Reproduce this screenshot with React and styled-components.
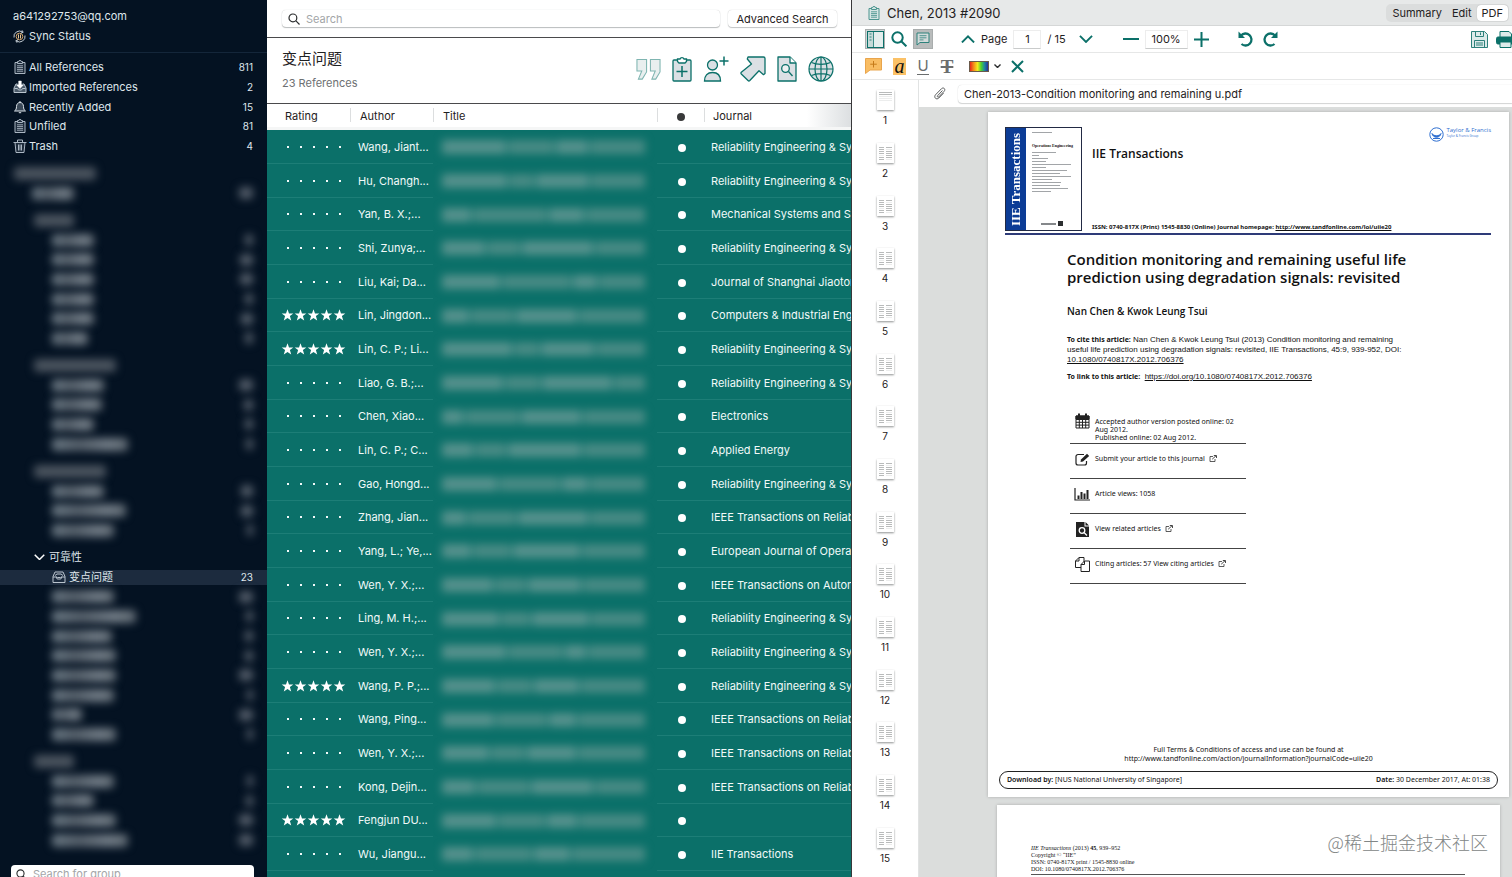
import React, { useState } from "react";
import styled, { createGlobalStyle, css } from "styled-components";

const GlobalStyle = createGlobalStyle`
  * {
    box-sizing: border-box;
  }

  body {
    margin: 0;
    overflow: hidden;
    background: #fff;
    color: #1f2122;
    font-family: Inter, "Noto Sans CJK SC", sans-serif;
    font-size: 11px;
    line-height: 14px;
  }

  button, input {
    font: inherit;
    color: inherit;
    border: 0;
    padding: 0;
    margin: 0;
    background: none;
  }

  ul, ol {
    list-style: none;
    margin: 0;
    padding: 0;
  }

  h1, h2, h3, p {
    margin: 0;
    font-weight: inherit;
    font-size: inherit;
  }

  svg {
    display: block;
    flex-shrink: 0;
  }
`;

const TEAL = "#0b7069";
const SERIF = `"Liberation Serif", serif`;

/* ---------- data ---------- */

const library = [
  { name: "All References", count: 811, icon: "clipboard" },
  { name: "Imported References", count: 2, icon: "import" },
  { name: "Recently Added", count: 15, icon: "bell" },
  { name: "Unfiled", count: 81, icon: "clipboard" },
  { name: "Trash", count: 4, icon: "trash" },
];

// hidden groups: [width of the name, width of the count]
const groupSets = [
  { head: 82, level: 0, items: [[42, 14]] },
  { head: 40, level: 1, items: [[42, 8], [42, 13], [42, 13], [42, 8], [42, 12], [36, 8]] },
  { head: 82, level: 1, items: [[52, 14], [50, 9], [42, 8], [76, 7]] },
  { head: 72, level: 1, items: [[52, 12], [74, 12], [62, 6]] },
];

const lowerItems = [[62, 14], [84, 7], [60, 8], [64, 8], [64, 14], [62, 6], [30, 14], [64, 6]];
const lastItems = [[62, 6], [42, 7], [64, 14], [76, 14]];

const RE = "Reliability Engineering & Sys";
const TR = "IEEE Transactions on Reliabi";

const references = [
  { author: "Wang, Jiant...", journal: RE, words: [60, 44, 30, 52] },
  { author: "Hu, Changh...", journal: RE, words: [62, 24, 50, 52] },
  { author: "Yan, B. X.;...", journal: "Mechanical Systems and Sig", words: [28, 70, 34, 56] },
  { author: "Shi, Zunya;...", journal: RE, words: [40, 30, 66, 46] },
  { author: "Liu, Kai; Da...", journal: "Journal of Shanghai Jiaotong", words: [56, 66, 24, 44] },
  { author: "Lin, Jingdon...", stars: true, journal: "Computers & Industrial Engi", words: [26, 42, 60, 64] },
  { author: "Lin, C. P.; Li...", stars: true, journal: RE, words: [66, 24, 50, 46] },
  { author: "Liao, G. B.;...", journal: RE, words: [58, 34, 66, 30] },
  { author: "Chen, Xiao...", journal: "Electronics", words: [20, 50, 56, 58] },
  { author: "Lin, C. P.; C...", journal: "Applied Energy", words: [30, 30, 70, 60] },
  { author: "Gao, Hongd...", journal: RE, words: [54, 60, 26, 54] },
  { author: "Zhang, Jian...", journal: TR, words: [22, 44, 64, 50] },
  { author: "Yang, L.; Ye,...", journal: "European Journal of Operati", words: [28, 36, 64, 60] },
  { author: "Wen, Y. X.;...", journal: "IEEE Transactions on Autom", words: [50, 30, 52, 60] },
  { author: "Ling, M. H.;...", journal: RE, words: [54, 28, 54, 52] },
  { author: "Wen, Y. X.;...", journal: RE, words: [60, 52, 20, 54] },
  { author: "Wang, P. P.;...", stars: true, journal: RE, words: [52, 34, 44, 62] },
  { author: "Wang, Ping...", journal: TR, words: [50, 48, 26, 64] },
  { author: "Wen, Y. X.;...", journal: TR, words: [46, 34, 48, 66] },
  { author: "Kong, Dejin...", journal: TR, words: [32, 50, 60, 48] },
  { author: "Fengjun DU...", stars: true, journal: "", words: [54, 46, 30, 66] },
  { author: "Wu, Jiangu...", journal: "IIE Transactions", words: [30, 54, 34, 70] },
];

/* ---------- icons ---------- */

const ClipboardIcon = ({ size = 14, color = "#aab6c2", fill = "#1d2b3b" }) => (
  <svg width={size} height={size} viewBox="0 0 14 14" fill="none" stroke={color}>
    <path d="M2 2.5h10v11H2z" fill={fill} />
    <path d="M4.5 3.5v-2h1.3a1.2 1.2 0 0 1 2.4 0h1.3v2z" fill={fill} />
    <path d="M4 5.8h6M4 7.6h6M4 9.4h6M4 11.2h6" strokeWidth="0.9" />
  </svg>
);

const ImportIcon = () => (
  <svg width="14" height="14" viewBox="0 0 14 14" fill="none" stroke="#b9c4ce">
    <path d="M4.5 4H3L1 8v4.5h12V8l-2-4H9.5" fill="#4b5a69" />
    <path d="M1.5 8.5h3l1 1.5h3l1-1.5h3" />
    <path d="M5.7 1h2.6v4h2L7 8.5 3.7 5h2z" fill="#fff" stroke="#fff" strokeWidth="0.5" />
  </svg>
);

const BellIcon = () => (
  <svg width="14" height="14" viewBox="0 0 14 14" fill="none" stroke="#dde4ea" strokeLinejoin="round">
    <path d="M1.5 11c1.6-1.1 1.9-2.2 2-4.5C3.6 4 5 2.5 7 2.5S10.4 4 10.5 6.500c.1 2.300.4 3.400 2 4.500z" fill="#3b4958" />
    <path d="M7 2.500V1M5.800 12.700h2.400" />
  </svg>
);

const TrashIcon = () => (
  <svg width="14" height="14" viewBox="0 0 14 14" fill="none" stroke="#aab6c2">
    <path d="M2 3.5l1 10h8l1-10z" fill="#1d2b3b" />
    <path d="M.5 3.5h13M4.5 3.2V1h5v2.200M5.500 5.500v6M7 5.500v6M8.500 5.500v6" />
  </svg>
);

const SyncIcon = () => (
  <svg width="13" height="13" viewBox="0 0 13 13" fill="none" stroke="#c3ccd4">
    <circle cx="6.5" cy="6.5" r="3.3" stroke="#d3a468" />
    <path d="M1 7.5A5.5 5.5 0 0 1 9.5 2M12 5.5A5.5 5.5 0 0 1 3.5 11M9 .3l1.200 2-2.200.8M4 12.700l-1.200-2 2.200-.8" />
    <path d="M5.5 4.5v4M7.5 4.5v4" stroke="#e6c79a" />
  </svg>
);

const GroupIcon = () => (
  <svg width="14" height="12" viewBox="0 0 14 12" fill="none" stroke="#bcc6d0" strokeLinejoin="round">
    <path d="M1 5.5L3 1h8l2 4.5v6H1z" />
    <path d="M1 6h3.200l1 2h3.600l1-2H13M3 4.500l2-1.500h4l2 1.500M4.500 5.500l1 1h3l1-1" />
  </svg>
);

const ChevronIcon = ({ width = 14, up, color = TEAL, stroke = 2 }) => (
  <svg width={width} height={width * 0.6} viewBox="0 0 15 9" fill="none" stroke={color} strokeWidth={stroke}>
    <path d={up ? "M1 8l6.5-6.5L14 8" : "M1 1l6.5 6.5L14 1"} />
  </svg>
);

const SearchIcon = ({ size = 12, color = "#2b2d2e", stroke = 1.2 }) => (
  <svg width={size} height={size} viewBox="0 0 12 12" fill="none" stroke={color} strokeWidth={stroke}>
    <circle cx="4.9" cy="4.9" r="3.9" />
    <path d="M7.7 7.7L11.5 11.5" />
  </svg>
);

const QuoteIcon = () => (
  <svg width="25" height="23" viewBox="0 0 26 23" fill="#e9efef" stroke="#7fb5b1" strokeWidth="1.1">
    <path d="M1 1h10v13L6.5 21.5H2.5L6 13H1z" />
    <path d="M15 1h10v13l-4.5 7.5h-4L20 13h-5z" />
  </svg>
);

const AddReferenceIcon = () => (
  <svg width="20" height="26" viewBox="0 0 20 26" fill="#dbe0e4" stroke={TEAL} strokeWidth="1.3">
    <rect x="1" y="4" width="18" height="21" rx="1" />
    <path d="M5.5 5.5V3H8a2.100 2.100 0 0 1 4 0h2.500v2.500L13 7H7z" fill="#fff" />
    <path d="M10 10v11M4.500 15.500h11" strokeWidth="1.500" />
  </svg>
);

const AddUserIcon = () => (
  <svg width="26" height="26" viewBox="0 0 26 26" fill="#dbe0e4" stroke={TEAL} strokeWidth="1.3">
    <circle cx="9.500" cy="9" r="5" />
    <path d="M1.500 25c0-5.500 3-8.500 8-8.500s8 3 8 8.500z" />
    <path d="M21 .5v9M16.500 5h9" strokeWidth="1.500" />
  </svg>
);

const ShareIcon = () => (
  <svg width="26" height="26" viewBox="0 0 26 26" fill="#dbe0e4" stroke={TEAL} strokeWidth="1.3" strokeLinejoin="round">
    <path d="M8 1h15.500c.9 0 1.500.6 1.500 1.500V17.500l-1.500 1.200-4.500-4L9.800 24.500c-.6.600-1.200.600-1.800 0L1.300 18c-.5-.600-.5-1.200 0-1.800L11.500 8 7.300 3z" />
  </svg>
);

const FindTextIcon = () => (
  <svg width="20" height="26" viewBox="0 0 20 26" fill="#dbe0e4" stroke={TEAL} strokeWidth="1.3" strokeLinejoin="round">
    <path d="M1 1h12l6 6v18H1z" />
    <path d="M13 1v6h6" fill="#fff" />
    <circle cx="8.5" cy="12.5" r="3.8" fill="#eef1f2" />
    <path d="M11.5 15.5l4 4.5" />
  </svg>
);

const GlobeIcon = () => (
  <svg width="26" height="26" viewBox="0 0 26 26" fill="none" stroke={TEAL} strokeWidth="1.2">
    <circle cx="13" cy="13" r="12" fill="#dbe0e4" />
    <ellipse cx="13" cy="13" rx="6" ry="12" />
    <path d="M13 1v24M1 13h24M3.5 6.5c5 2.5 14 2.5 19 0M3.5 19.5c5-2.5 14-2.5 19 0" />
  </svg>
);

const PanelIcon = () => (
  <svg width="17" height="17" viewBox="0 0 17 17" fill="none" stroke={TEAL}>
    <rect x=".5" y=".5" width="16" height="16" fill="#e4eeed" />
    <path d="M1 1h5v15H1z" fill="#c6dad8" stroke="none" />
    <path d="M6.5.5v16M2.500 3h2M2.500 6h2M2.500 9h2" strokeWidth=".8" />
  </svg>
);

const NoteIcon = () => (
  <svg width="14" height="14" viewBox="0 0 14 14" fill="none" stroke="#2c817b">
    <path d="M1 1h12v9.500H4L1 13z" fill="#d3dada" />
    <path d="M3.500 3.700h7M3.500 5.800h7M3.500 7.900h4" strokeWidth=".8" />
  </svg>
);

const MinusIcon = () => (
  <svg width="16" height="16" viewBox="0 0 16 16" stroke={TEAL} strokeWidth="2">
    <path d="M0 8h16" />
  </svg>
);

const PlusIcon = () => (
  <svg width="15" height="15" viewBox="0 0 15 15" stroke={TEAL} strokeWidth="2">
    <path d="M0 7.5h15M7.5 0v15" />
  </svg>
);

const RotateIcon = ({ redo }) => (
  <svg width="16" height="16" viewBox="0 0 16 16" fill="none" stroke={TEAL} strokeWidth="2.3">
    {redo ? (
      <>
        <path d="M12.500 13A6 6 0 1 1 13 4.500" />
        <path d="M15.500.5v6.500H9z" fill={TEAL} stroke="none" />
      </>
    ) : (
      <>
        <path d="M3.500 13A6 6 0 1 0 3 4.500" />
        <path d="M.5.5v6.500H7z" fill={TEAL} stroke="none" />
      </>
    )}
  </svg>
);

const SaveIcon = () => (
  <svg width="17" height="17" viewBox="0 0 17 17" fill="none" stroke="#2c817b">
    <path d="M.5.5h13l3 3v13H.5z" fill="#dcebea" />
    <path d="M4.5.5v5h8v-5M9.500 1.500v2.500M3.500 16.500v-7h10v7M5 12h7M5 14h7" />
  </svg>
);

const PrintIcon = () => (
  <svg width="19" height="17" viewBox="0 0 19 17" fill={TEAL} stroke={TEAL}>
    <path d="M4 6V.5h9l2.500 2.500v3" fill="#dcebea" />
    <rect x=".5" y="6" width="18" height="7" rx="1.5" />
    <path d="M4 11h11v5.500H4z" fill="#dcebea" />
  </svg>
);

const CommentIcon = () => (
  <svg width="17" height="16" viewBox="0 0 17 16" fill="#f9bd63" stroke="#e9a54c">
    <path d="M.5.5h16v11.500H5L.5 15.500z" />
    <path d="M8.500 3v6.500M5.200 6.200h6.600" stroke="#c67a1a" />
  </svg>
);

const CloseIcon = () => (
  <svg width="13" height="13" viewBox="0 0 13 13" stroke={TEAL} strokeWidth="2">
    <path d="M1 1l11 11M12 1L1 12" />
  </svg>
);

const ClipIcon = () => (
  <svg width="13" height="13" viewBox="0 0 13 13" fill="none" stroke="#5a5d5e" strokeLinecap="round">
    <path d="M9.2 3.8L4.6 8.7c-.8.9.3 2 1.2 1.2l5.4-5.7c1.7-2-.6-4.3-2.6-2.6L2.5 7.8c-2.200 2.600.9 5.500 3.300 3.200l4.500-4.600" />
  </svg>
);

const StarIcon = () => (
  <svg width="13" height="12" viewBox="0 0 13 12" fill="#fff">
    <path d="M6.5.3l1.500 4.200h4.300L8.900 7.100l1.300 4.400-3.700-2.600-3.700 2.600L4.100 7.100.7 4.500H5z" />
  </svg>
);

const CalendarIcon = () => (
  <svg width="15" height="16" viewBox="0 0 15 16" fill="none" stroke="#222">
    <path d="M1 3h13v12H1zM1 6.500h13M1 9.300h13M1 12.100h13M4.300 6v9M7.500 6v9M10.700 6v9" />
    <path d="M1 3h13v3H1z" fill="#222" />
    <path d="M4 .5v4M11 .5v4" strokeWidth="2" />
  </svg>
);

const SubmitIcon = () => (
  <svg width="15" height="13" viewBox="0 0 15 13" fill="none" stroke="#222" strokeWidth="1.2">
    <path d="M9 1.5H3a2 2 0 0 0-2 2V10a2 2 0 0 0 2 2h6.500a2 2 0 0 0 2-2V8" />
    <path d="M5.500 9l.5-2.500L12 .8 14.200 3 8 8.500z" fill="#222" stroke="none" />
  </svg>
);

const ChartIcon = () => (
  <svg width="16" height="13" viewBox="0 0 16 13" fill="none" stroke="#222" strokeWidth="2">
    <path d="M1 0v12h15" strokeWidth="1.2" />
    <path d="M4.500 11V7.500M7.500 11V4M10.500 11V5.500M13.500 11V2" />
  </svg>
);

const RelatedIcon = () => (
  <svg width="13" height="15" viewBox="0 0 13 15" fill="none">
    <path d="M0 0h8.500v4.500H13V15H0zM9.500 0L13 3.500H9.500z" fill="#222" />
    <circle cx="6" cy="8.5" r="2.8" stroke="#fff" strokeWidth="1.3" />
    <path d="M8 10.5l3 3" stroke="#fff" strokeWidth="1.3" />
  </svg>
);

const CitingIcon = () => (
  <svg width="15" height="15" viewBox="0 0 15 15" fill="#fff" stroke="#222">
    <path d="M4 .5h5v10H.5V4zM4 .5V4H.5" />
    <path d="M9.500 4h5v10.500H6V7.500zM9.500 4v3.500H6" />
  </svg>
);

const ExternalIcon = () => (
  <svg width="8" height="7" viewBox="0 0 8 7" fill="none" stroke="#333">
    <path d="M4 1.5H1v5h5V4" strokeWidth=".8" />
    <path d="M3.200 4.200L7 .8M4.800.5h2.700V3" strokeWidth=".9" />
  </svg>
);

const PublisherMark = () => (
  <svg width="15" height="15" viewBox="0 0 15 15" fill="none" stroke="#2f6fd0">
    <circle cx="7.5" cy="7.5" r="6.7" />
    <path d="M3 6.5c1.5 3 7.5 3 9 0-1 5-8 5-9 0z" fill="#2f6fd0" />
    <path d="M4 11.5h7" />
  </svg>
);

const libraryIcons = {
  clipboard: <ClipboardIcon />,
  import: <ImportIcon />,
  bell: <BellIcon />,
  trash: <TrashIcon />,
};

/* ---------- layout ---------- */

const Window = styled.div`
  display: grid;
  grid-template-columns: 267px minmax(0, 585fr) minmax(0, 660fr);
  grid-template-rows: minmax(0, 1fr);
  height: 100vh;
  overflow: hidden;
`;

/* ---------- sidebar ---------- */

const Sidebar = styled.nav`
  display: flex;
  flex-direction: column;
  overflow: hidden;
  background: #041222;
  color: #dfe6ec;

  > * {
    flex-shrink: 0;
  }
`;

const Account = styled.div`
  display: flex;
  flex-direction: column;
  gap: 6px;
  padding: 9px 13px;
  border-bottom: 1px solid #14263a;
`;

const SyncButton = styled.button`
  display: flex;
  align-items: center;
  gap: 3px;
`;

const LibraryList = styled.ul`
  padding-top: 4px;
`;

const GroupList = styled.ul`
  padding-top: 7px;
`;

const SideItem = styled.li`
  display: flex;
  align-items: center;
  height: 20px;

  &:nth-child(3n) {
    height: 19px;
  }
`;

const SideButton = styled.button`
  display: flex;
  align-items: center;
  gap: ${(p) => (p.$gap ? p.$gap : 2)}px;
  width: 100%;
  height: 15px;
  padding: 0 14px 0 ${(p) => p.$indent || 13}px;
  text-align: left;
  background: ${(p) => (p.$selected ? "#1c2b3e" : "transparent")};
`;

const Count = styled.span`
  margin-left: auto;
  font-size: 10px;
`;

const Smudge = styled.span`
  height: 13px;
  border-radius: 4px;
  background: ${(p) =>
    p.$dim
      ? "#4b545f"
      : "linear-gradient(90deg, #6c7a85, #555f6a 35%, #737d87 75%, #5f6972)"};
  filter: blur(4px);
`;

const SmudgeCount = styled(Smudge)`
  height: 12px;
  margin-left: auto;
  background: #525c68;
`;

const GroupSearch = styled.label`
  display: flex;
  align-items: center;
  gap: 6px;
  height: 18px;
  margin: 15px 13px 0 11px;
  padding: 0 5px;
  border-radius: 4px;
  background: #fff;
  color: #1f2122;
`;

const PlainInput = styled.input`
  flex: 1;
  min-width: 0;
  outline: none;

  &::placeholder {
    color: #a3a6a8;
    opacity: 1;
  }
`;

/* ---------- reference list ---------- */

const ListPane = styled.main`
  display: flex;
  flex-direction: column;
  overflow: hidden;
  border-right: 1px solid #38383a;
`;

const SearchBar = styled.div`
  display: flex;
  align-items: center;
  gap: 8px;
  flex-shrink: 0;
  height: 38px;
  padding: 0 14px 0 15px;
  border-bottom: 1px solid #4a4a4c;
`;

const SearchField = styled.label`
  display: flex;
  align-items: center;
  gap: 6px;
  flex: 1;
  height: 17px;
  padding: 0 6px;
  border-radius: 4px;
  box-shadow: 0 0 1px #c4c6c7, 0 1px 1px #b9bbbc;
`;

const AdvancedButton = styled.button`
  height: 17px;
  width: 109px;
  border-radius: 4px;
  background: #fff;
  box-shadow: 0 0 1px #b5b7b8, 0 1px 1px #c4c6c7;
`;

const ListHeader = styled.header`
  display: flex;
  align-items: center;
  justify-content: space-between;
  flex-shrink: 0;
  height: 66px;
  padding: 0 17px 3px 15px;
  border-bottom: 1px solid #4a4a4c;
`;

const ListTitle = styled.h1`
  font-size: 15px;
  line-height: 22px;
`;

const ListCount = styled.p`
  margin-top: 6px;
  color: #6d7072;
`;

const Actions = styled.div`
  display: flex;
  align-items: center;
  gap: 11px;
`;

const TableArea = styled.div`
  flex: 1;
  overflow: hidden;
  background: ${TEAL};
`;

const RefTable = styled.table`
  width: 100%;
  table-layout: fixed;
  border-collapse: separate;
  border-spacing: 0;
`;

const Column = styled.col`
  width: ${(p) => p.$width};
`;

const HeadCell = styled.th`
  height: 26px;
  padding: 0 0 0 ${(p) => p.$pad || 0}px;
  font-weight: 400;
  text-align: ${(p) => (p.$center ? "center" : "left")};
  background: #fff;
  border-bottom: 3px solid #f5f6f6;
  ${(p) =>
    p.$divided &&
    css`
      background: linear-gradient(#dcdedf, #dcdedf) 0 4px / 1px 14px no-repeat, #fff;
    `}
  ${(p) =>
    p.$last &&
    css`
      background: linear-gradient(#dcdedf, #dcdedf) 0 4px / 1px 14px no-repeat,
        linear-gradient(90deg, #fff 70%, #dcdfe1);
    `}
`;

const Row = styled.tr`
  height: 34px;
  color: #f2faf9;

  &:nth-child(3n) {
    height: 33px;
  }
`;

const Cell = styled.td`
  padding: 0 0 0 ${(p) => p.$pad || 0}px;
  white-space: nowrap;
  overflow: hidden;
  text-align: ${(p) => (p.$center ? "center" : "left")};
  border-bottom: ${(p) => (p.$bare ? "0" : "1px solid #1d7e77")};
`;

const Rating = styled.div`
  display: grid;
  grid-template-columns: repeat(5, 13px);
  align-items: center;
  justify-items: center;
`;

const Pip = styled.span`
  width: 2px;
  height: 2px;
  background: #f2faf9;
`;

const Dot = styled.span`
  display: inline-block;
  width: 8px;
  height: 8px;
  border-radius: 50%;
  vertical-align: middle;
  background: ${(p) => p.$color || "#fff"};
`;

const HiddenTitle = styled.div`
  display: flex;
  gap: 2px;
  margin-right: 12px;
  filter: blur(4px);
`;

const HiddenWord = styled.span`
  height: 14px;
  flex: ${(p) => p.$grow} 1 0;
  background: #55918c;

  &:nth-child(even) {
    background: #478a84;
  }
`;

/* ---------- document pane ---------- */

const DocPane = styled.section`
  display: flex;
  flex-direction: column;
  overflow: hidden;
`;

const DocTitleBar = styled.header`
  display: flex;
  align-items: center;
  gap: 6px;
  flex-shrink: 0;
  height: 26px;
  padding: 0 3px 0 15px;
  background: #e7e9e9;
  border-bottom: 1px solid #d5d7d7;
`;

const DocTitle = styled.h2`
  flex: 1;
  font-size: 13px;
`;

const Segments = styled.div`
  display: flex;
  padding: 1px;
  border-radius: 5px;
  background: #dbdddd;
`;

const Segment = styled.button`
  height: 16px;
  padding: 0 5px;
  border-radius: 4px;
  ${(p) =>
    p.$active &&
    css`
      background: #fff;
      box-shadow: 0 0 1px #9fa1a1;
    `}
`;

const Toolbar = styled.div`
  display: flex;
  align-items: center;
  flex-shrink: 0;
  height: 27px;
  padding-left: 13px;
  border-bottom: 1px solid #e6e7e7;
`;

const ToolGroup = styled.div`
  display: flex;
  align-items: center;
  gap: ${(p) => p.$gap || 6}px;
  margin-left: ${(p) => p.$left || 0}px;
`;

const ToolButton = styled.button`
  display: flex;
  align-items: center;
  justify-content: center;
`;

const ToggleButton = styled(ToolButton)`
  width: 20px;
  height: 20px;
  border: 1px solid #a9adad;
  background: ${(p) => (p.$dark ? "#b9bcbc" : "#cfd6d6")};
`;

const NumberBox = styled.input`
  width: ${(p) => p.$width}px;
  height: 19px;
  text-align: center;
  border: 1px solid #ededed;
  border-bottom-color: #c9cbcb;
`;

const FileActions = styled(ToolGroup)`
  margin-left: auto;
`;

const ClippedButton = styled(ToolButton)`
  width: 16px;
  overflow: hidden;
  justify-content: flex-start;
`;

const HighlightButton = styled(ToolButton)`
  width: 13px;
  height: 17px;
  background: #fbc166;
  font: italic 20px/17px ${SERIF};
  color: #111;
`;

const LetterButton = styled(ToolButton)`
  width: 14px;
  height: 17px;
  color: #6a6d6e;
  ${(p) =>
    p.$strike
      ? css`
          font: 700 19px/17px ${SERIF};
          text-decoration: line-through;
          text-decoration-thickness: 2px;
        `
      : css`
          width: 12px;
          font-size: 15px;
          line-height: 15px;
          border-bottom: 1px solid #6a6d6e;
        `}
`;

const Spectrum = styled.span`
  width: 20px;
  height: 11px;
  border: 1px solid #6a5a4a;
  background: linear-gradient(90deg, #e8261c, #f58a1a 20%, #f2ea1f 42%, #4fd02c 62%, #1f8a9c 80%, #28309c);
`;

const DocBody = styled.div`
  display: flex;
  flex: 1;
  min-height: 0;
`;

const Thumbs = styled.ol`
  flex: 0 0 67px;
  padding-top: 10px;
  overflow: hidden;
  border-right: 1px solid #e1e3e3;
`;

const Thumb = styled.li`
  height: 53px;

  &:nth-child(3n) {
    height: 52px;
  }
`;

const ThumbButton = styled.button`
  display: flex;
  flex-direction: column;
  align-items: center;
  gap: 3px;
  width: 100%;
  font-size: 10px;
`;

const ThumbPage = styled.span`
  display: grid;
  grid-template-columns: ${(p) => (p.$cover ? "1fr" : "1fr 1fr")};
  align-content: ${(p) => (p.$cover ? "start" : "center")};
  gap: 1px 2px;
  width: 17px;
  height: 20px;
  padding: 2px;
  background: #fff;
  box-shadow: 0 1px 2px #8f9292;
`;

const ThumbLine = styled.span`
  height: 1px;
  background: ${(p) => (p.$faint ? "#eceded" : "#b9bbbb")};
`;

const Viewer = styled.div`
  display: flex;
  flex-direction: column;
  flex: 1;
  min-width: 0;
`;

const FileBar = styled.div`
  display: flex;
  align-items: center;
  gap: 12px;
  flex-shrink: 0;
  height: 27px;
  padding-left: 14px;
`;

const FileName = styled.div`
  flex: 1;
  height: 18px;
  padding: 2px 6px;
  border-radius: 4px 0 0 4px;
  box-shadow: 0 0 1px #c6c8c8, 0 1px 1px #d3d5d5;
`;

const Pages = styled.div`
  position: relative;
  flex: 1;
  min-height: 0;
  overflow: hidden;
  padding: 5px 3px 0 69px;
  background: #dbdddc;
`;

const Page = styled.article`
  display: flex;
  flex-direction: column;
  aspect-ratio: 521 / 685;
  background: #fff;
  color: #111;
  box-shadow: 0 0 3px #a9acab;
  font-family: "Noto Sans", "Open Sans", sans-serif;
`;

const Masthead = styled.header`
  display: flex;
  gap: 10px;
  margin: 15px 18px 0 17px;
  padding-bottom: 2px;
  border-bottom: 2px solid #2e3b78;
`;

const Cover = styled.div`
  display: flex;
  flex: 0 0 77px;
  min-width: 0;
  height: 104px;
  border: 1px solid #222a44;
`;

const CoverSpine = styled.div`
  flex: 0 0 20px;
  background: #0c3c96;
  color: #fff;
  font: 700 13px/20px ${SERIF};
  text-align: center;
  white-space: nowrap;
  writing-mode: vertical-rl;
  transform: rotate(180deg);
`;

const CoverFront = styled.div`
  display: flex;
  flex-direction: column;
  flex: 1;
  min-width: 0;
  gap: 2px;
  padding: 4px 9px 4px 6px;
`;

const CoverName = styled.strong`
  margin: 8px 0 1px;
  font: 700 4px/6px ${SERIF};
  white-space: nowrap;
`;

const CoverLine = styled.span`
  width: ${(p) => p.$width}%;
  height: 1px;
  background: #a2a5a8;
`;

const CoverFoot = styled.div`
  display: flex;
  align-items: center;
  justify-content: center;
  gap: 2px;
  margin-top: auto;

  &::before {
    content: "";
    width: 15px;
    height: 2px;
    background: #85888b;
  }

  &::after {
    content: "";
    width: 5px;
    height: 5px;
    background: #2c2e30;
  }
`;

const MastText = styled.div`
  display: flex;
  flex-direction: column;
  justify-content: space-between;
  flex: 1;
  padding-top: 19px;
`;

const MastTitle = styled.h3`
  font: 600 12px/16px "Open Sans", sans-serif;
`;

const Issn = styled.p`
  font-size: 6px;
  line-height: 8px;
  font-weight: 700;
  white-space: nowrap;
`;

const TopLine = styled.div`
  display: flex;
  justify-content: space-between;
`;

const Publisher = styled.div`
  display: flex;
  gap: 2px;
  margin-top: -19px;
  height: 15px;
  color: #2f6fd0;
  font: 6px/7px "Open Sans", sans-serif;
`;

const PublisherSub = styled.small`
  display: block;
  font-size: 3px;
  line-height: 4px;
`;

const PaperLink = styled.a`
  color: inherit;
  text-decoration: ${(p) => (p.$plain ? "none" : "underline")};
`;

const PaperBody = styled.div`
  padding: 15px 90px 0 79px;
`;

const PaperTitle = styled.h3`
  font: 600 15px/18px "Open Sans", sans-serif;
  white-space: nowrap;
`;

const PaperAuthors = styled.p`
  margin-top: 18px;
  font: 600 10px/14px "Open Sans", sans-serif;
`;

const Citation = styled.p`
  margin-top: ${(p) => p.$top}px;
  font: 8px/10px "Liberation Sans", sans-serif;
  white-space: nowrap;

  b {
    font-family: "Noto Sans", sans-serif;
    font-size: 7px;
  }
`;

const Facts = styled.ul`
  width: 176px;
  margin: 31px 0 0 3px;
`;

const Fact = styled.li`
  display: flex;
  align-items: center;
  gap: 5px;
  height: 35px;
  padding-bottom: 4px;
  border-bottom: 1px solid #444;
  font-size: 7px;
  line-height: 8px;
  white-space: nowrap;

  &:first-child {
    height: 31px;
    padding-bottom: 0;
    align-items: flex-start;
  }

  &:first-child p {
    padding-top: 5px;
  }

  a {
    display: inline-flex;
    gap: 4px;
  }
`;

const FactIcon = styled.span`
  display: flex;
  justify-content: center;
  width: 16px;
  margin-left: 4px;
`;

const PaperTerms = styled.p`
  margin-top: auto;
  font-size: 7px;
  line-height: 9px;
  text-align: center;
`;

const Download = styled.footer`
  display: flex;
  align-items: center;
  justify-content: space-between;
  height: 18px;
  margin: 8px 11px;
  padding: 0 7px;
  border: 1px solid #222;
  border-radius: 9px;
  font-size: 7px;

  b {
    font-weight: 600;
  }
`;

const NextPage = styled(Page)`
  margin: 8px 9px 0;
  padding: 40px 34px 0;
  font: 6px/7px ${SERIF};
`;

const NextHead = styled.p`
  margin-right: 1px;
  padding-bottom: 1px;
  border-bottom: 1px solid #555;
`;

const Watermark = styled.div`
  position: absolute;
  right: 24px;
  bottom: 21px;
  color: #828686;
  font: 300 18px/28px "Noto Sans CJK SC", sans-serif;
`;

/* ---------- parts ---------- */

const HiddenItem = ({ widths, indent }) => (
  <SideItem aria-hidden="true">
    <SideButton $indent={indent} tabIndex={-1}>
      <Smudge style={{ width: widths[0] }} />
      <SmudgeCount style={{ width: widths[1] }} />
    </SideButton>
  </SideItem>
);

const HiddenGroup = ({ head, level, items }) => (
  <GroupList>
    <SideItem aria-hidden="true">
      <SideButton $indent={level ? 34 : 14} tabIndex={-1}>
        <Smudge $dim style={{ width: head }} />
      </SideButton>
    </SideItem>
    {items.map((widths, i) => (
      <HiddenItem key={i} widths={widths} indent={level ? 52 : 32} />
    ))}
  </GroupList>
);

const SidePanel = () => (
  <Sidebar>
    <Account>
      <span>a641292753@qq.com</span>
      <SyncButton>
        <SyncIcon />
        Sync Status
      </SyncButton>
    </Account>
    <LibraryList>
      {library.map((item) => (
        <SideItem key={item.name}>
          <SideButton>
            {libraryIcons[item.icon]}
            {item.name}
            <Count>{item.count}</Count>
          </SideButton>
        </SideItem>
      ))}
    </LibraryList>
    {groupSets.map((set, i) => (
      <HiddenGroup key={i} {...set} />
    ))}
    <GroupList>
      <SideItem>
        <SideButton $indent={34} $gap={4}>
          <ChevronIcon width={11} color="#fff" stroke={2} />
          可靠性
        </SideButton>
      </SideItem>
      <SideItem>
        <SideButton $indent={52} $gap={3} $selected>
          <GroupIcon />
          变点问题
          <Count>23</Count>
        </SideButton>
      </SideItem>
      {lowerItems.map((widths, i) => (
        <HiddenItem key={i} widths={widths} indent={52} />
      ))}
    </GroupList>
    <HiddenGroup head={40} level={1} items={lastItems} />
    <GroupSearch>
      <SearchIcon size={11} />
      <PlainInput placeholder="Search for group" aria-label="Search for group" />
    </GroupSearch>
  </Sidebar>
);

const ReferenceRow = ({ author, journal, stars, words }) => (
  <Row>
    <Cell />
    <Cell $pad={2}>
      <Rating>
        {[1, 2, 3, 4, 5].map((n) => (stars ? <StarIcon key={n} /> : <Pip key={n} />))}
      </Rating>
    </Cell>
    <Cell $pad={8}>{author}</Cell>
    <Cell $pad={9} $bare>
      <HiddenTitle aria-hidden="true">
        {words.map((w, i) => (
          <HiddenWord key={i} $grow={w} />
        ))}
      </HiddenTitle>
    </Cell>
    <Cell $center $pad={2}>
      <Dot />
    </Cell>
    <Cell $pad={7}>{journal}</Cell>
  </Row>
);

const ReferenceList = () => (
  <ListPane>
    <SearchBar>
      <SearchField>
        <SearchIcon />
        <PlainInput placeholder="Search" aria-label="Search" />
      </SearchField>
      <AdvancedButton>Advanced Search</AdvancedButton>
    </SearchBar>
    <ListHeader>
      <div>
        <ListTitle>变点问题</ListTitle>
        <ListCount>23 References</ListCount>
      </div>
      <Actions>
        <ToolButton aria-label="Insert citation"><QuoteIcon /></ToolButton>
        <ToolButton aria-label="New reference"><AddReferenceIcon /></ToolButton>
        <ToolButton aria-label="Share group"><AddUserIcon /></ToolButton>
        <ToolButton aria-label="Export"><ShareIcon /></ToolButton>
        <ToolButton aria-label="Find full text"><FindTextIcon /></ToolButton>
        <ToolButton aria-label="Online search"><GlobeIcon /></ToolButton>
      </Actions>
    </ListHeader>
    <TableArea>
      <RefTable>
        <colgroup>
          <Column $width="12px" />
          <Column $width="71px" />
          <Column $width="83px" />
          <Column $width="auto" />
          <Column $width="47px" />
          <Column $width="147px" />
        </colgroup>
        <thead>
          <tr>
            <HeadCell />
            <HeadCell $pad={6}>Rating</HeadCell>
            <HeadCell $pad={10} $divided>Author</HeadCell>
            <HeadCell $pad={10} $divided>Title</HeadCell>
            <HeadCell $center $divided>
              <Dot $color="#38393a" />
            </HeadCell>
            <HeadCell $pad={9} $last>Journal</HeadCell>
          </tr>
        </thead>
        <tbody>
          {references.map((r, i) => (
            <ReferenceRow key={i} {...r} />
          ))}
        </tbody>
      </RefTable>
    </TableArea>
  </ListPane>
);

const coverLines = [60, 18, 40, 36, 98, 36, 88, 70, 98, 50, 72, 70, 90, 48];

const FirstPage = () => (
  <Page>
    <Masthead>
      <Cover>
        <CoverSpine>IIE Transactions</CoverSpine>
        <CoverFront>
          <CoverLine $width={50} />
          <CoverName>Operations Engineering</CoverName>
          {coverLines.map((w, i) => (
            <CoverLine key={i} $width={w} />
          ))}
          <CoverFoot />
        </CoverFront>
      </Cover>
      <MastText>
        <TopLine>
          <MastTitle>IIE Transactions</MastTitle>
          <Publisher>
            <PublisherMark />
            <span>
              Taylor &amp; Francis
              <PublisherSub>Taylor &amp; Francis Group</PublisherSub>
            </span>
          </Publisher>
        </TopLine>
        <Issn>
          ISSN: 0740-817X (Print) 1545-8830 (Online) Journal homepage:{" "}
          <PaperLink href="#journal">http://www.tandfonline.com/loi/uiie20</PaperLink>
        </Issn>
      </MastText>
    </Masthead>
    <PaperBody>
      <PaperTitle>
        Condition monitoring and remaining useful life
        <br />
        prediction using degradation signals: revisited
      </PaperTitle>
      <PaperAuthors>Nan Chen &amp; Kwok Leung Tsui</PaperAuthors>
      <Citation $top={17}>
        <b>To cite this article:</b> Nan Chen &amp; Kwok Leung Tsui (2013) Condition monitoring and remaining
        <br />
        useful life prediction using degradation signals: revisited, IIE Transactions, 45:9, 939-952, DOI:
        <br />
        <PaperLink href="#doi">10.1080/0740817X.2012.706376</PaperLink>
      </Citation>
      <Citation $top={7}>
        <b>To link to this article:</b>&nbsp;{" "}
        <PaperLink href="#link">https://doi.org/10.1080/0740817X.2012.706376</PaperLink>
      </Citation>
      <Facts>
        <Fact>
          <FactIcon><CalendarIcon /></FactIcon>
          <p>
            Accepted author version posted online: 02
            <br />
            Aug 2012.
            <br />
            Published online: 02 Aug 2012.
          </p>
        </Fact>
        <Fact>
          <FactIcon><SubmitIcon /></FactIcon>
          <PaperLink $plain href="#submit">Submit your article to this journal <ExternalIcon /></PaperLink>
        </Fact>
        <Fact>
          <FactIcon><ChartIcon /></FactIcon>
          <p>Article views: 1058</p>
        </Fact>
        <Fact>
          <FactIcon><RelatedIcon /></FactIcon>
          <PaperLink $plain href="#related">View related articles <ExternalIcon /></PaperLink>
        </Fact>
        <Fact>
          <FactIcon><CitingIcon /></FactIcon>
          <PaperLink $plain href="#citing">Citing articles: 57 View citing articles <ExternalIcon /></PaperLink>
        </Fact>
      </Facts>
    </PaperBody>
    <PaperTerms>
      Full Terms &amp; Conditions of access and use can be found at
      <br />
      http://www.tandfonline.com/action/journalInformation?journalCode=uiie20
    </PaperTerms>
    <Download>
      <span><b>Download by:</b> [NUS National University of Singapore]</span>
      <span><b>Date:</b> 30 December 2017, At: 01:38</span>
    </Download>
  </Page>
);

const ThumbPreview = ({ cover }) => (
  <ThumbPage $cover={cover}>
    {Array.from({ length: cover ? 5 : 14 }, (_, i) => (
      <ThumbLine key={i} $faint={cover ? i > 1 : i % 5 === 3} />
    ))}
  </ThumbPage>
);

const DocumentPane = () => {
  const [tab, setTab] = useState("PDF");

  return (
    <DocPane>
      <DocTitleBar>
        <ClipboardIcon color="#4c958f" fill="#d6e6e4" />
        <DocTitle>Chen, 2013 #2090</DocTitle>
        <Segments>
          {["Summary", "Edit", "PDF"].map((name) => (
            <Segment key={name} $active={tab === name} onClick={() => setTab(name)}>
              {name}
            </Segment>
          ))}
        </Segments>
      </DocTitleBar>
      <Toolbar>
        <ToolGroup>
          <ToggleButton aria-label="Thumbnails"><PanelIcon /></ToggleButton>
          <ToolButton aria-label="Find"><SearchIcon size={16} color={TEAL} stroke={1.5} /></ToolButton>
          <ToggleButton $dark aria-label="Annotations"><NoteIcon /></ToggleButton>
        </ToolGroup>
        <ToolGroup $left={28}>
          <ToolButton aria-label="Previous page"><ChevronIcon up /></ToolButton>
          <label htmlFor="page-number">Page</label>
          <NumberBox id="page-number" $width={28} defaultValue="1" />
          <span>/ 15</span>
        </ToolGroup>
        <ToolGroup $left={13}>
          <ToolButton aria-label="Next page"><ChevronIcon /></ToolButton>
        </ToolGroup>
        <ToolGroup $left={30}>
          <ToolButton aria-label="Zoom out"><MinusIcon /></ToolButton>
          <NumberBox aria-label="Zoom" $width={43} defaultValue="100%" />
          <ToolButton aria-label="Zoom in"><PlusIcon /></ToolButton>
        </ToolGroup>
        <ToolGroup $left={29} $gap={8}>
          <ToolButton aria-label="Undo"><RotateIcon /></ToolButton>
          <ToolButton aria-label="Redo"><RotateIcon redo /></ToolButton>
        </ToolGroup>
        <FileActions $gap={8}>
          <ToolButton aria-label="Save"><SaveIcon /></ToolButton>
          <ClippedButton aria-label="Print"><PrintIcon /></ClippedButton>
        </FileActions>
      </Toolbar>
      <Toolbar>
        <ToolGroup $gap={11}>
          <ToolButton aria-label="Add note"><CommentIcon /></ToolButton>
          <HighlightButton aria-label="Highlight">a</HighlightButton>
          <LetterButton aria-label="Underline">U</LetterButton>
          <LetterButton $strike aria-label="Strike through">T</LetterButton>
        </ToolGroup>
        <ToolGroup $left={15} $gap={10}>
          <ToolGroup $gap={5}>
            <Spectrum />
            <ToolButton aria-label="Colour"><ChevronIcon width={7} color="#2b2d2e" stroke={3} /></ToolButton>
          </ToolGroup>
          <ToolButton aria-label="Close"><CloseIcon /></ToolButton>
        </ToolGroup>
      </Toolbar>
      <DocBody>
        <Thumbs>
          {Array.from({ length: 15 }, (_, i) => (
            <Thumb key={i}>
              <ThumbButton>
                <ThumbPreview cover={i === 0} />
                {i + 1}
              </ThumbButton>
            </Thumb>
          ))}
        </Thumbs>
        <Viewer>
          <FileBar>
            <ClipIcon />
            <FileName>Chen-2013-Condition monitoring and remaining u.pdf</FileName>
          </FileBar>
          <Pages>
            <FirstPage />
            <NextPage>
              <NextHead>
                <i>IIE Transactions</i> (2013) <b>45</b>, 939–952
                <br />
                Copyright © “IIE”
                <br />
                ISSN: 0740-817X print / 1545-8830 online
                <br />
                DOI: 10.1080/0740817X.2012.706376
              </NextHead>
            </NextPage>
            <Watermark>@稀土掘金技术社区</Watermark>
          </Pages>
        </Viewer>
      </DocBody>
    </DocPane>
  );
};

export default function App() {
  return (
    <Window>
      <GlobalStyle />
      <SidePanel />
      <ReferenceList />
      <DocumentPane />
    </Window>
  );
}
